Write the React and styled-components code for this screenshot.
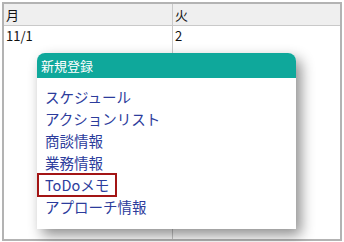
import React from 'react';
import styled, { createGlobalStyle } from 'styled-components';

const GlobalStyle = createGlobalStyle`
  html, body {
    margin: 0;
    padding: 0;
    background: #ffffff;
  }
  body {
    font-family: "Noto Sans CJK JP", "DejaVu Sans", sans-serif;
  }
`;

const Page = styled.div`
  position: relative;
  width: 344px;
  height: 242px;
  padding: 2px 0 0 2px;
  box-sizing: border-box;
`;

const Calendar = styled.div`
  width: 340px;
  height: 239px;
  box-sizing: border-box;
  border: 2px solid #b3b3b3;
  display: grid;
  grid-template-columns: 169px 1fr;
  grid-template-rows: 22px 1fr;
  color: #111111;
  font-size: 13px;
`;

const HeadCell = styled.div`
  background: #efefef;
  border-bottom: 1px solid #c9c9c9;
  border-right: ${(props) => (props.last ? 'none' : '1px solid #c9c9c9')};
  padding: 1px 0 0 2px;
  line-height: 19px;
`;

const DayCell = styled.div`
  border-right: ${(props) => (props.last ? 'none' : '1px solid #c9c9c9')};
  padding: 1px 0 0 2px;
  line-height: 18px;
`;

const Menu = styled.div`
  position: absolute;
  left: 37px;
  top: 53px;
  width: 259px;
  height: 176px;
  background: #ffffff;
  border-radius: 8px 8px 0 0;
  box-shadow: 5px 6px 14px rgba(0, 0, 0, 0.45);
  display: flex;
  flex-direction: column;
`;

const MenuTitle = styled.div`
  background: #0fa89b;
  color: #ffffff;
  height: 25px;
  line-height: 25px;
  padding-left: 4px;
  font-size: 13px;
  border-radius: 8px 8px 0 0;
`;

const MenuList = styled.ul`
  list-style: none;
  margin: 0;
  padding: 8px 0 0 0;
`;

const MenuItem = styled.li`
  margin: ${(props) => (props.selected ? '-1px 0' : '0 0 0 8px')};
  padding-left: ${(props) => (props.selected ? '6px' : '0')};
  width: ${(props) => (props.selected ? '80px' : 'auto')};
  height: ${(props) => (props.selected ? '24px' : '22px')};
  line-height: 20px;
  line-height: ${(props) => (props.selected ? '20px' : '22px')};
  box-sizing: border-box;
  border: ${(props) => (props.selected ? '2px solid #a31515' : 'none')};
  color: #2c3c9c;
  font-size: 14.5px;
  cursor: pointer;
`;

const items = [
  'スケジュール',
  'アクションリスト',
  '商談情報',
  '業務情報',
  'ToDoメモ',
  'アプローチ情報',
];

const App = () => (
  <Page>
    <GlobalStyle />
    <Calendar>
      <HeadCell>月</HeadCell>
      <HeadCell last>火</HeadCell>
      <DayCell>11/1</DayCell>
      <DayCell last>2</DayCell>
    </Calendar>
    <Menu>
      <MenuTitle>新規登録</MenuTitle>
      <MenuList>
        {items.map((item) => (
          <MenuItem key={item} selected={item === 'ToDoメモ'}>{item}</MenuItem>
        ))}
      </MenuList>
    </Menu>
  </Page>
);

export default App;
